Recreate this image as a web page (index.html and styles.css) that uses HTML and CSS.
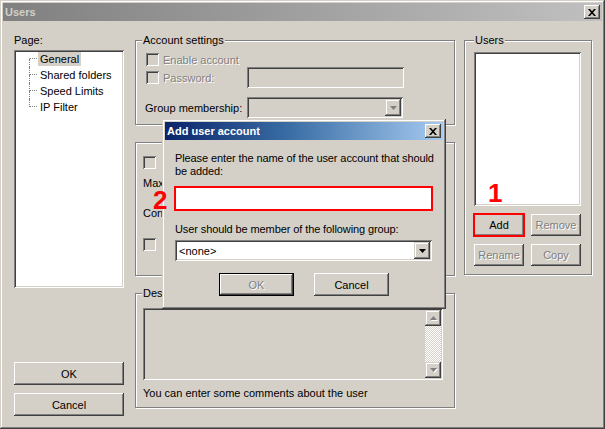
FILE: index.html
```html
<!DOCTYPE html>
<html lang="en">
<head>
    <meta charset="UTF-8">
    <title>Users</title>
    <link rel="stylesheet" href="styles.css">
</head>
<body>
<div class="window">
    <div class="titlebar">
        <span class="title">Users</span>
        <span class="close-btn"><svg width="8" height="7" viewBox="0 0 8 7"><path d="M0 0h2l2 2.3L6 0h2L5 3.5 8 7H6L4 4.7 2 7H0l3-3.5z"/></svg></span>
    </div>
    <div class="client">
        <div class="side">
            <div class="caption">Page:</div>
            <div class="tree-box">
                <ul class="tree">
                    <li><span class="branch"><i></i><i></i></span><span class="node selected">General</span></li>
                    <li><span class="branch"><i></i><i></i></span><span class="node">Shared folders</span></li>
                    <li><span class="branch"><i></i><i></i></span><span class="node">Speed Limits</span></li>
                    <li><span class="branch"><i></i><i></i></span><span class="node">IP Filter</span></li>
                </ul>
            </div>
            <button class="btn side-btn push">OK</button>
            <button class="btn side-btn">Cancel</button>
        </div>

        <div class="main">
            <div class="group account">
                <div class="group-title">Account settings</div>
                <div class="row r1"><span class="checkbox"></span><span class="dim">Enable account</span></div>
                <div class="row r2">
                    <span class="row-label"><span class="checkbox"></span><span class="dim">Password:</span></span>
                    <span class="field"></span>
                </div>
                <div class="row r3">
                    <span class="row-label">Group membership:</span>
                    <span class="combo"><span class="combo-btn"><svg width="7" height="4" viewBox="0 0 7 4"><path d="M0 0h7L3.5 4z" fill="#808080"/></svg></span></span>
                </div>
            </div>

            <!-- mostly hidden behind the dialog -->
            <div class="group limits">
                <div class="row l1"><span class="checkbox"></span></div>
                <div class="row l2"><span class="row-label short">Max</span><span class="field small"></span></div>
                <div class="row l3"><span class="row-label short">Con</span><span class="field small"></span></div>
                <div class="row l4"><span class="checkbox"></span></div>
            </div>

            <div class="group desc">
                <div class="group-title">Description</div>
                <div class="memo">
                    <div class="scrollbar">
                        <span class="sb-btn"><svg width="7" height="4" viewBox="0 0 7 4"><path d="M0 4h7L3.5 0z" fill="#808080"/></svg></span>
                        <span class="sb-track"></span>
                        <span class="sb-btn"><svg width="7" height="4" viewBox="0 0 7 4"><path d="M0 0h7L3.5 4z" fill="#808080"/></svg></span>
                    </div>
                </div>
                <div class="hint">You can enter some comments about the user</div>
            </div>
        </div>

        <div class="users">
            <div class="group users-group">
                <div class="group-title">Users</div>
                <div class="user-list"></div>
                <div class="btn-row">
                    <button class="btn small marked">Add</button>
                    <button class="btn small" disabled>Remove</button>
                </div>
                <div class="btn-row">
                    <button class="btn small" disabled>Rename</button>
                    <button class="btn small" disabled>Copy</button>
                </div>
            </div>
        </div>
    </div>

    <!-- modal on top of the page -->
    <div class="dialog">
        <div class="titlebar active">
            <span class="title">Add user account</span>
            <span class="close-btn"><svg width="8" height="7" viewBox="0 0 8 7"><path d="M0 0h2l2 2.3L6 0h2L5 3.5 8 7H6L4 4.7 2 7H0l3-3.5z"/></svg></span>
        </div>
        <div class="dialog-body">
            <div class="prompt">Please enter the name of the user account that should<br>be added:</div>
            <div class="name-input"></div>
            <div class="prompt group-prompt">User should be member of the following group:</div>
            <div class="combo white"><span class="combo-text">&lt;none&gt;</span><span class="combo-btn"><svg width="7" height="4" viewBox="0 0 7 4"><path d="M0 0h7L3.5 4z"/></svg></span></div>
            <div class="dialog-buttons">
                <button class="btn dlg-btn default" disabled>OK</button>
                <button class="btn dlg-btn">Cancel</button>
            </div>
        </div>
    </div>

    <span class="marker m1">1</span>
    <span class="marker m2">2</span>
</div>
</body>
</html>
```

FILE: styles.css
```css
body {
    margin: 0;
    font-family: "Liberation Sans", Arial, sans-serif;
    font-size: 11px;
    color: #000;
    background: #d4d0c8;
}
.window {
    position: relative;
    width: 605px;
    height: 429px;
    box-sizing: border-box;
    padding: 3px;
    display: flex;
    flex-direction: column;
    background: #d4d0c8;
    box-shadow: inset -1px -1px #404040, inset 1px 1px #d4d0c8, inset -2px -2px #808080, inset 2px 2px #fff;
}
.titlebar {
    height: 18px;
    display: flex;
    align-items: center;
    padding: 0 2px;
    background: linear-gradient(to right, #808080, #c0c0c0);
}
.titlebar .title {
    font-weight: bold;
    color: #d4d0c8;
}
.titlebar.active {
    background: linear-gradient(to right, #0a246a, #3a6ea5 45%, #a6caf0);
}
.titlebar.active .title {
    color: #fff;
}
.close-btn {
    margin-left: auto;
    width: 16px;
    height: 14px;
    display: flex;
    align-items: center;
    justify-content: center;
    background: #d4d0c8;
    box-shadow: inset -1px -1px #404040, inset 1px 1px #fff, inset -2px -2px #808080;
}
.client {
    flex: 1;
    display: flex;
    padding: 13px 10px 10px 11px;
}

/* left column */
.side {
    width: 110px;
    margin-right: 11px;
    display: flex;
    flex-direction: column;
}
.caption {
    line-height: 13px;
}
.tree-box {
    margin-top: 3px;
    height: 238px;
    background: #fff;
    box-shadow: inset 1px 1px #808080, inset -1px -1px #fff, inset 2px 2px #404040, inset -2px -2px #d4d0c8;
}
.tree {
    list-style: none;
    margin: 1px 0 0;
    padding: 0 0 0 15px;
}
.tree li {
    display: flex;
    align-items: center;
    height: 16px;
}
.branch {
    width: 8px;
    height: 16px;
    flex: none;
}
.branch i {
    display: block;
    box-sizing: border-box;
    height: 8px;
    border-left: 1px dotted #808080;
}
.branch i:first-child {
    border-bottom: 1px dotted #808080;
}
.tree li:first-child .branch i:first-child {
    border-left-color: transparent;
}
.tree li:last-child .branch i:last-child {
    border-left-color: transparent;
}
.node {
    margin-left: 1px;
    padding: 0 2px;
    line-height: 14px;
}
.node.selected {
    background: #d4d0c8;
}

.btn {
    font: inherit;
    color: #000;
    background: #d4d0c8;
    border: none;
    padding: 0;
    box-shadow: inset -1px -1px #404040, inset 1px 1px #fff, inset -2px -2px #808080;
}
.btn:disabled {
    color: #808080;
    text-shadow: 1px 1px #fff;
}
.side-btn {
    height: 23px;
    margin-top: 8px;
}
.side-btn.push {
    margin-top: auto;
}

/* middle column */
.main {
    width: 320px;
    margin-right: 9px;
    display: flex;
    flex-direction: column;
}
.group {
    box-sizing: border-box;
    border: 1px solid #808080;
    box-shadow: inset 1px 1px #fff, 1px 1px #fff;
    padding-left: 7px;
}
.group-title {
    width: fit-content;
    margin: -7px 0 0 -1px;
    padding: 0 1px;
    line-height: 13px;
    background: #d4d0c8;
}
.account {
    margin-top: 6px;
    height: 85px;
    padding-left: 10px;
}
.account .group-title {
    margin-left: -4px;
}
.row {
    display: flex;
    align-items: center;
}
.row-label {
    width: 101px;
    display: flex;
    align-items: center;
    flex: none;
}
.row-label.short {
    width: 140px;
}
.r1 {
    margin-top: 6px;
    height: 13px;
}
.r2 {
    margin-top: 1px;
    height: 21px;
}
.r3 {
    margin-top: 9px;
    height: 21px;
}
.r3 .row-label {
    margin-left: -1px;
    width: 102px;
}
.checkbox {
    width: 13px;
    height: 13px;
    margin-right: 4px;
    flex: none;
    background: #d4d0c8;
    box-shadow: inset 1px 1px #808080, inset -1px -1px #fff, inset 2px 2px #404040, inset -2px -2px #d4d0c8;
}
.dim {
    color: #808080;
    text-shadow: 1px 1px #fff;
}
.field {
    width: 157px;
    height: 21px;
    background: #d4d0c8;
    box-shadow: inset 1px 1px #808080, inset -1px -1px #fff, inset 2px 2px #404040, inset -2px -2px #d4d0c8;
}
.field.small {
    width: 60px;
}
.combo {
    box-sizing: border-box;
    width: 156px;
    height: 21px;
    padding: 2px;
    display: flex;
    align-items: center;
    background: #d4d0c8;
    box-shadow: inset 1px 1px #808080, inset -1px -1px #fff, inset 2px 2px #404040, inset -2px -2px #d4d0c8;
}
.combo-btn {
    margin-left: auto;
    width: 16px;
    height: 17px;
    display: flex;
    align-items: center;
    justify-content: center;
    background: #d4d0c8;
    box-shadow: inset -1px -1px #404040, inset 1px 1px #d4d0c8, inset -2px -2px #808080, inset 2px 2px #fff;
}

.limits {
    margin-top: 17px;
    height: 134px;
}
.l1 {
    margin-top: 13px;
    height: 13px;
}
.l2 {
    margin-top: 3px;
    height: 21px;
}
.l3 {
    margin-top: 9px;
    height: 21px;
}
.l4 {
    margin-top: 15px;
    height: 13px;
}

.desc {
    margin-top: 17px;
    height: 115px;
}
.memo {
    box-sizing: border-box;
    margin-top: 8px;
    width: 300px;
    height: 72px;
    padding: 2px;
    display: flex;
    justify-content: flex-end;
    background: #d4d0c8;
    box-shadow: inset 1px 1px #808080, inset -1px -1px #fff, inset 2px 2px #404040, inset -2px -2px #d4d0c8;
}
.scrollbar {
    width: 16px;
    display: flex;
    flex-direction: column;
}
.sb-btn {
    height: 16px;
    display: flex;
    align-items: center;
    justify-content: center;
    background: #d4d0c8;
    box-shadow: inset -1px -1px #404040, inset 1px 1px #d4d0c8, inset -2px -2px #808080, inset 2px 2px #fff;
}
.sb-btn svg {
    filter: drop-shadow(1px 1px 0 #fff);
}
.sb-track {
    flex: 1;
    background: repeating-conic-gradient(#fff 0 25%, #d4d0c8 0 50%) 0 0 / 2px 2px;
}
.hint {
    margin-top: 7px;
    line-height: 13px;
}

/* right column */
.users {
    width: 128px;
}
.users-group {
    margin-top: 6px;
    height: 235px;
    padding-left: 9px;
}
.users-group .group-title {
    margin-left: 0;
}
.user-list {
    margin-top: 5px;
    width: 107px;
    height: 154px;
    background: #fff;
    box-shadow: inset 1px 1px #808080, inset -1px -1px #fff, inset 2px 2px #404040, inset -2px -2px #d4d0c8;
}
.btn-row {
    display: flex;
    gap: 7px;
    margin-top: 8px;
}
.btn.small {
    width: 50px;
    height: 22px;
}
.btn.marked {
    outline: 2px solid #f00;
    outline-offset: -1px;
}

/* Add user account dialog */
.dialog {
    position: absolute;
    left: 162px;
    top: 119px;
    width: 284px;
    height: 190px;
    box-sizing: border-box;
    padding: 3px;
    background: #d4d0c8;
    box-shadow: inset -1px -1px #404040, inset 1px 1px #d4d0c8, inset -2px -2px #808080, inset 2px 2px #fff;
}
.dialog-body {
    padding: 12px 10px 0 10px;
}
.prompt {
    line-height: 13px;
    white-space: nowrap;
    letter-spacing: -0.1px;
}
.name-input {
    margin: 8px 0 0 -1px;
    width: 259px;
    height: 25px;
    box-sizing: border-box;
    background: #fff;
    border: 2px solid #f00;
}
.group-prompt {
    margin-top: 12px;
}
.combo.white {
    margin-top: 4px;
    width: 257px;
    background: #fff;
}
.combo-text {
    padding-left: 2px;
}
.dialog-buttons {
    display: flex;
    justify-content: center;
    gap: 20px;
    margin-top: 12px;
}
.dlg-btn {
    width: 75px;
    height: 23px;
}
.dlg-btn.default {
    box-shadow: inset 0 0 0 1px #000, inset -2px -2px #404040, inset 2px 2px #fff, inset -3px -3px #808080;
}

.marker {
    position: absolute;
    font-size: 26px;
    line-height: 20px;
    font-weight: bold;
    color: #f00;
}
.m1 {
    left: 488px;
    top: 183px;
}
.m2 {
    left: 153px;
    top: 190px;
}
```
